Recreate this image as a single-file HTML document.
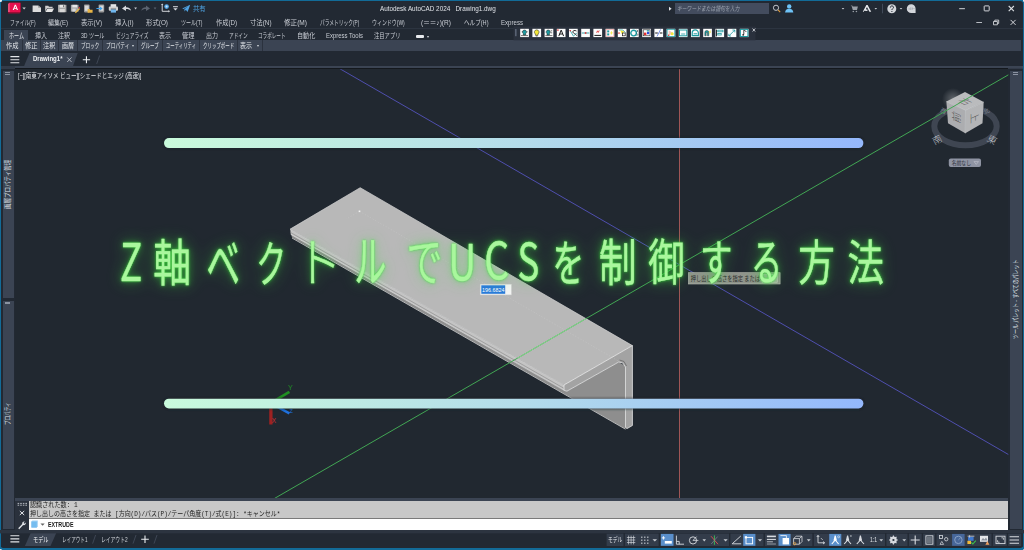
<!DOCTYPE html>
<html lang="ja">
<head>
<meta charset="utf-8">
<title>Z軸ベクトルでUCSを制御する方法</title>
<style>
*{box-sizing:border-box;margin:0;padding:0}
html,body{width:1024px;height:550px;overflow:hidden;background:#126b98}
body{position:relative;font-family:"Liberation Sans","Noto Sans CJK JP",sans-serif;color:#d6dae0;font-size:7px;line-height:1}
.abs{position:absolute}
#win{position:absolute;left:1px;top:1px;width:1022px;height:547px;background:#222933;border-radius:2px 3px 3px 2px;overflow:hidden}
#titlebar{left:0;top:0;width:1022px;height:16px}
#menubar{left:0;top:16px;width:1022px;height:11px}
#ribtabs{left:0;top:27px;width:1022px;height:12px;border-top:1px solid #2c3440}
#panels{left:0;top:39px;width:1020px;height:11px;background:#3b4453}
#doctabs{left:0;top:51px;width:1022px;height:15px}
#canvas{left:14.3px;top:68.2px;width:993px;height:430px;background:#212830}
#lstrip{left:2px;top:70px;width:11.4px;height:457.5px;background:#3b4453}
#rstrip{left:1009.1px;top:70px;width:12px;height:457.5px;background:#3b4453}
#cmd{left:14px;top:497px;width:993px;height:32px;background:#2a313c;border-top:3px solid #3b4453}
#hist{left:14px;top:0;width:979px;height:17px;background:#c8c8c8}
#inp{left:14px;top:18px;width:979px;height:11px;background:#fff;box-shadow:0 -1px 0 #7a7a7a}
#status{left:0;top:529px;width:1022px;height:17px;background:#222933}
#ui{position:absolute;left:0;top:0;width:1024px;height:550px;overflow:hidden;pointer-events:none}
.L{position:absolute;white-space:pre;transform-origin:0 50%;line-height:1.2;color:#cfd3da}
.tri{position:absolute;width:0;height:0;border-left:1.8px solid transparent;border-right:1.8px solid transparent;border-top:2.2px solid #d6dae0}
.sep{position:absolute;width:1px;background:#2b323e}
.bx{position:absolute}
</style>
</head>
<body>
<div id="win">
  <div id="titlebar" class="abs"></div>
  <div id="menubar" class="abs"></div>
  <div id="ribtabs" class="abs"></div>
  <div id="panels" class="abs"></div>
  <div id="doctabs" class="abs"></div>
  <div class="abs" style="left:0;top:65px;width:1022px;height:3px;background:#333b49"></div><div class="abs" style="left:14.3px;top:65px;width:1007.7px;height:2.200px;background:#3b4453"></div><div class="abs" style="left:14.3px;top:67px;width:993px;height:1.300px;background:#14181d"></div>
  <div id="lstrip" class="abs"></div>
  <div id="rstrip" class="abs"></div>
  <div id="canvas" class="abs"></div>

<svg id="scene" class="abs" style="left:-1px;top:-1px" width="1024" height="550" viewBox="0 0 1024 550">
  <defs>
    <clipPath id="topface"><polygon points="360.200,187.700 290.200,229.100 564,385 632.400,345.600"/></clipPath>
    <clipPath id="cv"><rect x="15.3" y="69.2" width="993" height="429.500"/></clipPath>
    <linearGradient id="barg" x1="0" y1="0" x2="1" y2="0">
      <stop offset="0" stop-color="#c9fbdc"/>
      <stop offset="0.5" stop-color="#b4ddea"/>
      <stop offset="1" stop-color="#94b8fc"/>
    </linearGradient>
    <filter id="neon" x="-5%" y="-60%" width="110%" height="220%" color-interpolation-filters="sRGB">
      <feFlood flood-color="#3ae03a" result="gc"/>
      <feComposite in="gc" in2="SourceAlpha" operator="in" result="gs"/>
      <feGaussianBlur in="gs" stdDeviation="8" result="b1"/>
      <feComponentTransfer in="b1" result="b1a"><feFuncA type="linear" slope="0.5"/></feComponentTransfer>
      <feGaussianBlur in="gs" stdDeviation="3.2" result="bm"/>
      <feComponentTransfer in="bm" result="bma"><feFuncA type="linear" slope="0.45"/></feComponentTransfer>
      <feGaussianBlur in="gs" stdDeviation="1.3" result="b2"/>
      <feComponentTransfer in="b2" result="b2a"><feFuncA type="linear" slope="0.85"/></feComponentTransfer>
      <feMerge><feMergeNode in="b1a"/><feMergeNode in="bma"/><feMergeNode in="b2a"/><feMergeNode in="SourceGraphic"/></feMerge>
    </filter>
    <filter id="soft" x="-5%" y="-100%" width="110%" height="300%">
      <feGaussianBlur stdDeviation="1.2"/>
    </filter>
  <radialGradient id="vcglow"><stop offset="0" stop-color="#fff" stop-opacity=".28"/><stop offset="1" stop-color="#fff" stop-opacity="0"/></radialGradient>
  </defs>
  <g clip-path="url(#cv)" id="cad">
    <!-- 3D bracket -->
    <g id="bracket" stroke-linejoin="round">
      <polygon points="291,233.500 564.200,390.400 566.900,391.200 618.500,362.100 625.500,366 625.500,429 292,237.600" fill="#8e8e8e"/>
      <path d="M292 238L625.500 429.200" stroke="#c6c6c6" stroke-width=".9" fill="none"/>
      <polygon points="290.200,229.100 564,385 564.200,390.400 290.800,234.400" fill="#c4c4c4"/>
      <path d="M290.600 232.500L564.100 388.400" stroke="#8f8f8f" stroke-width=".7" fill="none"/>
      <path d="M290.800 234.400L564.200 390.400" stroke="#e2e2e2" stroke-width=".6" fill="none"/>
      <polygon points="360.200,187.700 290.200,229.100 564,385 632.400,345.600" fill="#b8b8b8" stroke="#d6d6d6" stroke-width=".7"/>
      <polygon points="564,385 632.400,345.600 632.400,425.500 627,428.600 625.500,427.500 625.500,367 622.500,362.800 618.500,362.100 566.900,391.200 564.200,390.400" fill="#a3a3a3" stroke="#e8e8e8" stroke-width=".8"/>
      <path d="M619.500 360l4.500 1.500 2.500 4.500" stroke="#6a6a6a" stroke-width=".8" fill="none"/>
    </g>

    <!-- dashed guides on top face -->
    <path d="M359.500 211.300L621 362.500M359.500 211.300L346 219.200" stroke="#d6d6d6" stroke-width=".5" stroke-dasharray="1.500 1.500" fill="none" opacity=".5"/>
    <rect x="358.700" y="210.500" width="1.600" height="1.600" fill="#f4f4f4"/>
    <!-- UCS icon -->
    <g id="ucs" font-family="'Liberation Sans',sans-serif" font-size="7">
      <path d="M270.900 402v22.600" stroke="#9e2222" stroke-width="3.300"/>
      <path d="M273.500 401.400L289.400 391.900" stroke="#1f8f22" stroke-width="2.800"/>
      <path d="M273.500 404.600L289.400 413.400" stroke="#1f72e0" stroke-width="2.400"/>
      <text x="288" y="389.500" fill="#1f8f22">Y</text>
      <text x="271.800" y="422.800" fill="#d03030" font-size="6.500">X</text>
      <text x="289.500" y="412.500" fill="#1f72e0" font-size="5.500">Z</text>
    </g>
    <!-- ViewCube -->
    <g id="viewcube" font-family="'Noto Sans CJK JP','Liberation Sans',sans-serif">
      <ellipse cx="965.500" cy="126.300" rx="31.200" ry="19" fill="none" stroke="#3f4652" stroke-width="6"/>
      <circle cx="953" cy="99" r="11" fill="url(#vcglow)"/>
      <polygon points="965,91.900 983.700,102.100 965.500,110.400 946.400,101.600" fill="#babbbd"/>
      <polygon points="946.400,101.600 965.500,110.400 965.300,133.300 948,123.300" fill="#acadb0"/>
      <polygon points="965.500,110.400 983.700,102.100 982.500,123.300 965.300,133.300" fill="#b4b5b7"/>
      <path d="M946.400 101.600L965.500 110.400L983.700 102.100M965.500 110.400L965.300 133.300" stroke="#d9dadc" stroke-width=".6" fill="none"/>
      <text transform="matrix(.91 .42 -.91 .415 961.400 103.200)" font-size="10.500" fill="#555" text-anchor="middle" font-weight="300">右</text>
      <text transform="matrix(0 -1 .91 .42 960.300 118.700)" font-size="10.500" fill="#555" text-anchor="middle" font-weight="300">前</text>
      <text transform="matrix(0 1 -.91 .415 970.700 118.700)" font-size="10.500" fill="#555" text-anchor="middle" font-weight="300">上</text>
      <text transform="translate(938.700 142.800) rotate(-28)" font-size="9.500" fill="#c6cad1" text-anchor="middle" font-weight="300">南</text>
      <text transform="translate(990.500 142.800) rotate(28)" font-size="9.500" fill="#c6cad1" text-anchor="middle" font-weight="300">東</text>
      <text transform="translate(942.500 113) rotate(28)" font-size="6" fill="#7d8490" text-anchor="middle">西</text>
      <text transform="translate(987.500 113) rotate(-28)" font-size="6" fill="#7d8490" text-anchor="middle">北</text>
      <rect x="948.800" y="158.500" width="32.200" height="8.600" rx="2" fill="#8f94a3"/>
      <text x="951.700" y="165.200" font-size="5.600" fill="#2c303a" textLength="19.300" lengthAdjust="spacingAndGlyphs">名前なし</text>
      <path d="M974 161.600h4.500l-2.250 2.800z" fill="none" stroke="#c2c6d0" stroke-width=".6"/>
    </g>
    <!-- crosshair axes -->
    <line x1="679.5" y1="60" x2="679.5" y2="500" stroke="#a05656" stroke-width="1"/>
    <line x1="273" y1="499.300" x2="1011" y2="73.300" stroke="#42a654" stroke-width="1"/>
    <line x1="273" y1="499.300" x2="1011" y2="73.300" stroke="#86d48c" stroke-width="1" clip-path="url(#topface)"/>
    <line x1="336" y1="66.5" x2="1011" y2="456" stroke="#4f4fae" stroke-width="1"/>

    <!-- tooltip + dynamic input -->
    <g font-family="'Liberation Sans','Noto Sans CJK JP',sans-serif">
      <rect x="688.400" y="272.700" width="91.700" height="11.300" fill="#90948c" stroke="#b9bcb4" stroke-width=".6"/>
      <rect x="762" y="274.200" width="15.500" height="8.300" fill="#a9ada6" stroke="#c9ccc4" stroke-width=".5"/>
      <text x="690.700" y="281" font-size="6.600" fill="#2b2b2b" textLength="69.300" lengthAdjust="spacingAndGlyphs">押し出しの高さを指定 または</text>
      <rect x="480.200" y="284.200" width="31.200" height="10.700" fill="#f4f4f4" stroke="#d0d0d0" stroke-width=".5"/>
      <rect x="481.300" y="285.300" width="23.900" height="8.500" fill="#2a7bd9"/>
      <text x="482" y="292" font-size="6" fill="#fff" textLength="22.500" lengthAdjust="spacingAndGlyphs">196.6824</text>
    </g>
  </g>
  <!-- overlay -->
  <g id="overlay">
    <rect x="163.5" y="137.6" width="700.5" height="11" rx="5.5" fill="#1b2028" filter="url(#soft)" opacity="0.7"/>
    <rect x="163.5" y="398.2" width="700.5" height="11" rx="5.5" fill="#1b2028" filter="url(#soft)" opacity="0.7"/>
    <rect x="164" y="138.1" width="699.4" height="10" rx="5" fill="url(#barg)"/>
    <rect x="164" y="398.7" width="699.4" height="9.7" rx="4.85" fill="url(#barg)"/>
    <g filter="url(#neon)">
      <text id="title" y="280" font-family="'Noto Sans CJK JP','Liberation Sans',sans-serif" font-weight="400" font-size="50" fill="#a9f79d" stroke="#a9f79d" stroke-width="0.4" stroke-linejoin="round" text-anchor="middle"><tspan x="131.0" y="280.5" font-size="51.4" textLength="22.19" lengthAdjust="spacingAndGlyphs">Z</tspan><tspan x="172.2" y="281.0" font-size="50.0" textLength="37.79" lengthAdjust="spacingAndGlyphs">軸</tspan><tspan x="223.2" y="285.0" font-size="58.5" textLength="33.87" lengthAdjust="spacingAndGlyphs">ベ</tspan><tspan x="271.3" y="281.5" font-size="48.9" textLength="29.99" lengthAdjust="spacingAndGlyphs">ク</tspan><tspan x="318.5" y="282.0" font-size="52.5" font-weight="300" textLength="47.32" lengthAdjust="spacingAndGlyphs">ト</tspan><tspan x="370.4" y="282.0" font-size="55.2" textLength="31.74" lengthAdjust="spacingAndGlyphs">ル</tspan><tspan x="424.5" y="281.0" font-size="52.6" font-weight="350" textLength="35.93" lengthAdjust="spacingAndGlyphs">で</tspan><tspan x="462.2" y="279.5" font-size="48.8" textLength="27.87" lengthAdjust="spacingAndGlyphs">U</tspan><tspan x="496.7" y="279.0" font-size="50.1" textLength="24.83" lengthAdjust="spacingAndGlyphs">C</tspan><tspan x="528.4" y="280.0" font-size="50.0" textLength="21.75" lengthAdjust="spacingAndGlyphs">S</tspan><tspan x="568.3" y="280.5" font-size="48.9" textLength="31.61" lengthAdjust="spacingAndGlyphs">を</tspan><tspan x="617.7" y="281.0" font-size="50.1" textLength="37.86" lengthAdjust="spacingAndGlyphs">制</tspan><tspan x="666.5" y="279.5" font-size="49.0" textLength="36.45" lengthAdjust="spacingAndGlyphs">御</tspan><tspan x="716.3" y="280.0" font-size="47.7" textLength="32.44" lengthAdjust="spacingAndGlyphs">す</tspan><tspan x="766.6" y="279.5" font-size="48.8" textLength="31.15" lengthAdjust="spacingAndGlyphs">る</tspan><tspan x="816.6" y="280.0" font-size="48.0" textLength="36.61" lengthAdjust="spacingAndGlyphs">方</tspan><tspan x="865.6" y="280.0" font-size="47.9" textLength="36.39" lengthAdjust="spacingAndGlyphs">法</tspan></text>
    </g>
  </g>
</svg>
  <div id="cmd" class="abs"><div id="hist" class="abs"></div><div id="inp" class="abs"></div></div>
  <div id="status" class="abs"></div>
</div>
<div id="ui"><i class="bx" style="left:4px;top:30px;width:24px;height:11px;background:#3b4453;"></i>
<i class="bx" style="left:416px;top:34.5px;width:8px;height:3.5px;background:#e8eaee;border-radius:1px"></i>
<i class="tri" style="left:426.5px;top:35.5px"></i>
<i class="sep" style="left:21.5px;top:40px;height:11px"></i>
<i class="sep" style="left:39.5px;top:40px;height:11px"></i>
<i class="sep" style="left:57.5px;top:40px;height:11px"></i>
<i class="sep" style="left:77.0px;top:40px;height:11px"></i>
<i class="sep" style="left:102.0px;top:40px;height:11px"></i>
<i class="sep" style="left:137.0px;top:40px;height:11px"></i>
<i class="sep" style="left:162.0px;top:40px;height:11px"></i>
<i class="sep" style="left:199.0px;top:40px;height:11px"></i>
<i class="sep" style="left:236.5px;top:40px;height:11px"></i>
<i class="sep" style="left:261.5px;top:40px;height:11px"></i>
<i class="tri" style="left:132px;top:45px"></i><i class="tri" style="left:256.5px;top:45px"></i>
<i class="bx" style="left:674.8px;top:3px;width:94.6px;height:10.7px;background:#434c5e;"></i>
<svg class="bx" style="left:0;top:0" width="1024" height="70" viewBox="0 0 1024 70">
<!-- app logo -->
<path d="M9.400 2.800h11.400v9l-1.200 1.800h-11.400v-9z" fill="#9c0c34"/>
<path d="M9.400 2.800h10.800v9.200h-12v-8z" fill="#e5104e"/>
<path d="M8.200 4l1.400-1.200v9.200h-1.400z" fill="#ef5f88"/>
<path d="M12.700 10l2.100-5.200h1.100l2.100 5.200h-1.200l-.45-1.150h-2l-.45 1.150zM14.700 7.900h1.300l-.65-1.800z" fill="#fff"/>
<path d="M22.4 7.6h3.4l-1.7 2z" fill="#d0d4da"/>
<!-- new -->
<path d="M32.6 5.4h5.6l2.8 2.4v4.2h-8.4z" fill="#dcdcdc"/><path d="M38.2 5.4v2.4h2.8z" fill="#9a9a9a"/>
<!-- open -->
<path d="M45.2 5.8h3l.8 1h3.6v1.2h-5.4l-2 3.6z" fill="#cfcfcf"/><path d="M47.4 8.4h6.6l-1.8 3.6h-6.8z" fill="#e4e4e4"/>
<!-- save -->
<path d="M58 4.8h8.4v7.4h-8.4z" fill="#a8a8a8"/><rect x="59.6" y="4.8" width="5.2" height="2.8" fill="#e6e6e6"/><rect x="59.6" y="9" width="5.2" height="3.2" fill="#d8d8d8"/><rect x="63" y="5.2" width="1.2" height="2" fill="#777"/>
<!-- save as -->
<path d="M70.9 4.8h7.6v6.8h-7.6z" fill="#a8a8a8"/><rect x="72.3" y="4.8" width="4.8" height="2.6" fill="#e6e6e6"/><rect x="72.3" y="8.6" width="3.4" height="3" fill="#d8d8d8"/><path d="M75.4 11.8l3.6-3.8 1 1-3.6 3.8-1.4.4z" fill="#e8b84a"/><path d="M78.4 7.4l.8-.6 1 1-.6.8z" fill="#e0353a"/>
<!-- open from mobile -->
<rect x="84" y="4.6" width="5.6" height="7.8" rx=".8" fill="#9a9a9a"/><rect x="84.9" y="5.6" width="3.8" height="5.2" fill="#d9d9d9"/><path d="M87.6 9h2l.6.8h2.4v3h-5z" fill="#e8b445"/>
<!-- save to mobile -->
<rect x="98.6" y="4.6" width="5.6" height="7.8" rx=".8" fill="#9a9a9a"/><rect x="99.5" y="5.6" width="3.8" height="5.2" fill="#d9d9d9"/><path d="M96.4 8.1h3.6v-1.5l2.6 2-2.6 2v-1.5h-3.6z" fill="#3ea2ea"/>
<!-- print -->
<rect x="110.6" y="4.2" width="5.6" height="3" fill="#e6e6e6"/><rect x="108.8" y="6.4" width="9.2" height="4.4" rx="1" fill="#d2d2d2"/><rect x="110.8" y="9.2" width="5.2" height="3.4" fill="#6fb6ee"/><rect x="110.8" y="8.6" width="5.2" height=".8" fill="#555"/>
<!-- undo -->
<path d="M122 8.4l4-3v1.8c3 0 4.8 1.2 5 3.6-1.200-1.400-2.600-1.800-5-1.800v1.900z" fill="#d6d9de"/>
<path d="M134.200 7.600h2.800l-1.400 1.800z" fill="#c8ccd2"/>
<!-- redo (dim) -->
<path d="M150 8.400l-4-3v1.800c-3 0-4.400 1.200-4.600 3.600 1.200-1.400 2.200-1.800 4.600-1.800v1.900z" fill="#5b6370"/>
<path d="M153.700 7.600h2.700l-1.350 1.800z" fill="#5b6370"/>
<!-- workspace -->
<path d="M162.200 4.300v7h7" fill="none" stroke="#d0d3d8" stroke-width="1"/><path d="M162.200 3.400l-1.200 1.600h2.400zM170 11.300l-1.600-1.200v2.400z" fill="#d0d3d8"/><circle cx="166.600" cy="6.600" r="2.300" fill="#56a8e8"/><circle cx="166.600" cy="6.600" r="1" fill="#cfe6f8"/>
<!-- customize -->
<rect x="173" y="6.200" width="4.900" height="1" fill="#d6d9de"/><path d="M173.300 8.200h4.300l-2.150 2.200z" fill="#d6d9de"/>
<!-- share plane -->
<path d="M182.200 8.600l8-3.800-2.600 7.200-1.800-2.200-1.200 1.600-.2-2.200 3.800-3-4.600 2.800z" fill="#4fa3e3"/>
<!-- search arrow, magnifier, user -->
<path d="M669 6.800l2.600 2-2.600 2z" fill="#e4e6ea"/>
<circle cx="776" cy="7.800" r="2.600" fill="none" stroke="#cfd3d9" stroke-width=".9"/><path d="M778 9.900l2.200 2.300" stroke="#e09a3a" stroke-width="1.100"/>
<circle cx="789.200" cy="6.400" r="2.200" fill="#6ec2f6"/><path d="M785.100 12.400c.2-2.600 2-3.600 4.100-3.600s3.900 1 4.100 3.600z" fill="#6ec2f6"/>
<!-- right cluster -->
<path d="M841.700 7.900h2.600l-1.300 1.500z" fill="#c8ccd2"/>
<path d="M850.600 5.400h1.600l.5 1.200h5.200l-.9 3.400h-4.200l-1.200-4z" fill="#9aa0a8"/><circle cx="853.300" cy="11.500" r=".8" fill="#9aa0a8"/><circle cx="856.400" cy="11.500" r=".8" fill="#9aa0a8"/>
<path d="M862.800 11.800l3.600-6.800h1.200l3.600 6.800h-1.800l-2.400-4.800-1.200 2.200 2 .6-.6 1.200-3-.2-.4 1z" fill="#e8eaee"/>
<path d="M874.500 7.900h2.600l-1.300 1.500z" fill="#c8ccd2"/>
<rect x="882" y="3.800" width=".8" height="9.500" fill="#4a5363"/>
<circle cx="891.800" cy="8.700" r="4.500" fill="#d3d6db"/><path d="M890.300 7.600c0-2.200 3.200-2.200 3.200-.2 0 1.200-1.600 1.200-1.600 2.600M891.900 11v1" fill="none" stroke="#222933" stroke-width="1"/>
<path d="M899.700 7.900h2.600l-1.300 1.500z" fill="#c8ccd2"/>
<path d="M911.200 4.300a4.400 4.400 0 0 1 4.400 4.400v4.400h-4.400a4.400 4.400 0 0 1 0-8.800z" fill="#d3d6db"/><path d="M909.200 9.600v-1.400M910.800 10v-2.600M912.400 9.600v-2M914 9v-1" stroke="#8a8f98" stroke-width=".6"/>
<!-- window controls -->
<path d="M959.200 8.700h5.700" stroke="#e6e8ec" stroke-width=".9"/>
<rect x="984.200" y="5.900" width="5" height="5" fill="none" stroke="#e6e8ec" stroke-width=".9" rx=".6"/>
<path d="M1008.700 6l5.200 5.200M1013.900 6l-5.200 5.200" stroke="#dcdfe3" stroke-width="1.100"/>
<path d="M976.300 22.500h5.700" stroke="#c9cdd4" stroke-width=".9"/>
<path d="M993.500 21.500h3.900v3.300h-3.900zM994.800 21.400v-1.300h3.900v3.300h-1.200" fill="none" stroke="#e6e8ec" stroke-width=".8"/>
<path d="M1010.600 19.900l5 5M1015.600 19.900l-5 5" stroke="#e6e8ec" stroke-width=".9"/>
<!-- express toolbar -->
<rect x="513.500" y="26.500" width="242" height="13.800" fill="#2a313d"/>
<rect x="515" y="29" width="1.600" height="7.200" fill="#596273"/>
<g transform="translate(520.2,28.8)"><rect width="8.7" height="8.3" fill="#fdfdfd"/><path d="M4.3 1.2a2 2 0 0 1 1.2 3.6v1.4h-2.4v-1.4a2 2 0 0 1 1.2-3.6z" fill="#1f9aa0" stroke="#1a1a1a" stroke-width=".5"/><path d="M.8 6.8h7M1.5 3h1M6.5 3h1" stroke="#1a1a1a" stroke-width=".6"/></g><g transform="translate(532.4,28.8)"><rect width="8.7" height="8.3" fill="#fdfdfd"/><path d="M4.3 1a2.3 2.3 0 0 1 1.3 4.2v1.3h-2.6v-1.3a2.3 2.3 0 0 1 1.3-4.2z" fill="#f2e63a" stroke="#1a1a1a" stroke-width=".5"/><path d="M3.4 7.2h1.8" stroke="#1a1a1a" stroke-width=".6"/></g><g transform="translate(544.6,28.8)"><rect width="8.7" height="8.3" fill="#fdfdfd"/><path d="M3.6 1.2a2 2 0 0 1 1.2 3.6v1.4h-2.4v-1.4a2 2 0 0 1 1.2-3.6z" fill="#1f9aa0" stroke="#1a1a1a" stroke-width=".5"/><path d="M.8 6.8h7M6 2l1.6 0M6 4h1.6" stroke="#1a1a1a" stroke-width=".6"/></g><g transform="translate(556.8,28.8)"><rect width="8.7" height="8.3" fill="#fdfdfd"/><path d="M2 7.3l2.4-6 2.4 6M2.9 5.2h3" fill="none" stroke="#1a1a1a" stroke-width="1"/><rect x=".4" y=".6" width="1.4" height="1.4" fill="#e03030"/></g><g transform="translate(569.0,28.8)"><rect width="8.7" height="8.3" fill="#fdfdfd"/><path d="M1 1.5l3.4 5.8 3.4-3" fill="none" stroke="#1f9aa0" stroke-width=".8"/><path d="M7.5 2.2c-3-1.6-4.6.8-3 2 1.6 1 3 1.6 3.2 2.6" fill="none" stroke="#1a1a1a" stroke-width=".9"/><rect x=".6" y="1.2" width="1.3" height="1.3" fill="#e03030"/></g><g transform="translate(581.2,28.8)"><rect width="8.7" height="8.3" fill="#fdfdfd"/><path d="M.6 4.2h7.6" stroke="#1f9aa0" stroke-width=".9"/><rect x="3.6" y="3.4" width="1.6" height="1.6" fill="#e03030"/></g><g transform="translate(593.4,28.8)"><rect width="8.7" height="8.3" fill="#fdfdfd"/><path d="M1 6.6h6.8" stroke="#1a1a1a" stroke-width="1"/><path d="M3.2 4l.9-2 .8 1.6.9-2" fill="none" stroke="#e03030" stroke-width=".8"/></g><g transform="translate(605.6,28.8)"><rect width="8.7" height="8.3" fill="#fdfdfd"/><rect x=".5" y=".5" width="7.7" height="7.3" fill="none" stroke="#e9a0a0" stroke-width=".7"/><rect x="1.6" y="1.6" width="2" height="2" fill="#1f9aa0"/><rect x="1.6" y="4.6" width="2" height="2" fill="#1f9aa0"/><path d="M6.8 1.5l-2.4 3 1.4.3-1 2.2 2.6-3.2-1.4-.2z" fill="#f2e63a"/></g><g transform="translate(617.8,28.8)"><rect width="8.7" height="8.3" fill="#fdfdfd"/><path d="M1 1.2h4l2.6 2.6" fill="none" stroke="#1f9aa0" stroke-width=".8"/><path d="M2.5 1.5l4 1.2-2.4 2.8z" fill="#f2e63a"/><rect x="4.8" y="4.2" width="2.6" height="2.8" fill="#fff" stroke="#1a1a1a" stroke-width=".7"/><rect x=".5" y="3.6" width="1.4" height="1.4" fill="#e03030"/></g><g transform="translate(630.0,28.8)"><rect width="8.7" height="8.3" fill="#fdfdfd"/><circle cx="3.6" cy="4.3" r="2.8" fill="none" stroke="#1f9aa0" stroke-width="1.4"/><path d="M6.8 1l1 1.2-1 1.2M6.8 4.6l1 1.2-1 1.2" fill="none" stroke="#1a1a1a" stroke-width=".6"/></g><g transform="translate(642.2,28.8)"><rect width="8.7" height="8.3" fill="#fdfdfd"/><rect x="1" y="1" width="6.8" height="6" fill="none" stroke="#1a1a1a" stroke-width=".6"/><rect x="1.8" y="3.8" width="2.4" height="2.6" fill="#e03030"/><rect x="4.8" y="3" width="2.2" height="2.4" fill="#2a50d8"/><rect x="4.6" y="1.4" width="2.2" height="1.2" fill="#1f9aa0"/></g><g transform="translate(654.4,28.8)"><rect width="8.7" height="8.3" fill="#fdfdfd"/><path d="M.8 4.2h2.6M5.4 4.2h2.6" stroke="#1a1a1a" stroke-width="1.1"/><path d="M2.6 7.6l3.6-7" stroke="#2a50d8" stroke-width=".6"/></g><g transform="translate(666.6,28.8)"><rect width="8.7" height="8.3" fill="#fdfdfd"/><rect x=".5" y=".5" width="7.7" height="7.3" fill="none" stroke="#1f9aa0" stroke-width=".8"/><path d="M2 1.4l4.6 2.8-4.6 2.8z" fill="#f3c9b8"/><circle cx="5.6" cy="5" r="1.5" fill="#f2e63a"/><rect x="1.4" y="5.8" width="1.3" height="1.3" fill="#e03030"/></g><g transform="translate(678.8,28.8)"><rect width="8.7" height="8.3" fill="#fdfdfd"/><rect x=".7" y="1.2" width="7.3" height="5.8" fill="none" stroke="#1f9aa0" stroke-width="1"/><path d="M2.4 5.2h4" stroke="#1f9aa0" stroke-width=".8"/></g><g transform="translate(691.0,28.8)"><rect width="8.7" height="8.3" fill="#fdfdfd"/><path d="M1.2 6.8v-2.6a3.1 3.1 0 0 1 6.2 0v2.6z" fill="none" stroke="#1f9aa0" stroke-width="1.2"/><path d="M2.6 5h3.6" stroke="#1f9aa0" stroke-width="1"/></g><g transform="translate(703.2,28.8)"><rect width="8.7" height="8.3" fill="#fdfdfd"/><path d="M1.6 7v-3.4a2 2 0 0 1 4 0v3.4h-1.3v-3.2h-1.3v3.2z" fill="#1f9aa0" stroke="#1a1a1a" stroke-width=".4"/><path d="M7.6 1l-2 2.4 1.1.3-.8 1.8 2.1-2.6-1.1-.2z" fill="#f2e63a"/></g><g transform="translate(715.4,28.8)"><rect width="8.7" height="8.3" fill="#fdfdfd"/><path d="M1 .8v6.8" stroke="#1a1a1a" stroke-width="1"/><rect x="2.4" y="1.4" width="5.2" height="1.6" fill="none" stroke="#1f9aa0" stroke-width=".8"/><rect x="2.4" y="4.6" width="3.4" height="1.6" fill="none" stroke="#1f9aa0" stroke-width=".8"/></g><g transform="translate(727.6,28.8)"><rect width="8.7" height="8.3" fill="#fdfdfd"/><path d="M1.2 7.2l6-6M7.2 1.2h-2.4M7.2 1.2v2.4M1.2 7.2h2.2M1.2 7.2v-2.2" fill="none" stroke="#1f9aa0" stroke-width=".8"/></g><g transform="translate(739.8,28.8)"><rect width="8.7" height="8.3" fill="#fdfdfd"/><rect x=".6" y=".6" width="7.5" height="7.1" fill="none" stroke="#1f9aa0" stroke-width="1"/><path d="M4 1.4v4.2M4 1.6c1.6 0 2.2.8 2.2 1.6" fill="none" stroke="#1a1a1a" stroke-width=".8"/><circle cx="3.4" cy="6" r=".9" fill="#1a1a1a"/></g>
<path d="M752.600 28.500l2.600 3M755.200 28.500l-2.600 3" stroke="#e6e8ec" stroke-width=".8"/>
</svg>
<svg class="bx" style="left:0;top:48px" width="140" height="22" viewBox="0 48 140 22">
<path d="M24.100 65.900l5.400-12.800h48.200l-4.700 12.800z" fill="#3b4453"/>
<path d="M10.400 56.600h8.900M10.400 59.700h8.900M10.400 62.700h8.900" stroke="#e2e5e9" stroke-width="1.100"/>
<path d="M67.200 57.400l4.400 4.600M71.600 57.400l-4.400 4.600" stroke="#c5c9d0" stroke-width=".8"/>
<path d="M82.800 59.750h7.300M86.450 56.200v7.100" stroke="#eceef1" stroke-width="1.100"/>
<path d="M96.700 63.900l3-8.500" stroke="#4a5363" stroke-width=".7"/>
</svg>
<i class="bx" style="left:5px;top:72px;width:5.2px;height:0.8px;background:#8b93a1;"></i>
<i class="bx" style="left:5px;top:73.6px;width:5.2px;height:0.8px;background:#8b93a1;"></i>
<i class="bx" style="left:1012.5px;top:72px;width:5px;height:0.8px;background:#8b93a1;"></i>
<i class="bx" style="left:1012.5px;top:73.6px;width:5px;height:0.8px;background:#8b93a1;"></i>
<i class="bx" style="left:2px;top:298px;width:13px;height:2.6px;background:#222933;"></i>
<i class="bx" style="left:5px;top:301.6px;width:5.2px;height:0.8px;background:#8b93a1;"></i>
<i class="bx" style="left:5px;top:303.1px;width:5.2px;height:0.8px;background:#8b93a1;"></i>
<svg class="bx" style="left:0;top:494px" width="1024" height="56" viewBox="0 494 1024 56">
<!-- cmd handle icons -->
<path d="M17.600 503.400h1.600M20.200 503.400h1.600M22.800 503.400h1.600M25.400 503.400h1.600M17.600 505.200h1.600M20.200 505.200h1.600M22.800 505.200h1.600M25.400 505.200h1.600" stroke="#c5c9d0" stroke-width=".9"/>
<path d="M19.800 511l4.400 4M24.200 511l-4.400 4" stroke="#e2e5e9" stroke-width="1"/>
<path d="M18.200 528.200l4-4.200a2 2 0 0 1 2.600-2.400l-1.200 1.400.8.800 1.400-1.200a2 2 0 0 1-2.600 2.400l-4 4.200z" fill="#e2e5e9"/>
<!-- cube + arrow -->
<path d="M31.400 521.600l1-1.100h5.400v5.800l-1 1.300h-5.400z" fill="#9fd0f4"/><path d="M31.400 521.600h5.400v6h-5.400z" fill="#76bdf0"/>
<path d="M40.500 523.500h4.200l-2.100 2.300z" fill="#666"/>
<!-- layout tabs -->
<path d="M24.900 545.900l6-13.400h25.600l-6 13.400z" fill="#3b4453"/>
<path d="M10.400 535.800h8.900M10.400 538.900h8.900M10.400 541.900h8.900" stroke="#e2e5e9" stroke-width="1.100"/>
<path d="M92.600 543.600l3-8.600M133 543.600l3-8.600M154 543.600l3-8.600" stroke="#4a5363" stroke-width=".7"/>
<path d="M141.200 539.300h7.600M145 535.600v7.400" stroke="#eceef1" stroke-width="1.100"/>
<rect x="0" y="530" width="1024" height="3.400" fill="#2c3440"/><rect x="606.600" y="533.700" width="414.600" height="12.300" fill="#333c4a"/><rect x="623.5" y="533" width="1.400" height="14" fill="#222933"/><path d="M628.600 535.600v8.800M631.100 535.600v8.800M633.600 535.600v8.800M626.900 537.500h8.400M626.900 540h8.400M626.900 542.500h8.400" stroke="#d9dce1" stroke-width=".65" fill="none"/><rect x="641.2" y="536.6" width="1.200" height="1.200" fill="#d9dce1"/><rect x="641.2" y="539.6" width="1.200" height="1.200" fill="#d9dce1"/><rect x="641.2" y="542.6" width="1.200" height="1.200" fill="#d9dce1"/><rect x="644.2" y="536.6" width="1.200" height="1.200" fill="#d9dce1"/><rect x="644.2" y="539.6" width="1.200" height="1.200" fill="#d9dce1"/><rect x="644.2" y="542.6" width="1.200" height="1.200" fill="#d9dce1"/><rect x="647.2" y="536.6" width="1.200" height="1.200" fill="#d9dce1"/><rect x="647.2" y="539.6" width="1.200" height="1.200" fill="#d9dce1"/><rect x="647.2" y="542.6" width="1.200" height="1.200" fill="#d9dce1"/><path d="M652.5 539.200h4.6l-2.30 2.200z" fill="#c8ccd2"/><rect x="658.7" y="533" width="1.400" height="14" fill="#222933"/><rect x="660.9" y="533.900" width="12.6" height="11.900" fill="#5a8fcb"/><path d="M663.400 536.200v3.400M661.800 537.900h3.300" stroke="#fff" stroke-width=".9"/><rect x="664.800" y="541" width="7" height="2.600" fill="#fff"/><path d="M676.400 535.600v8.600h7.600M676.400 541.400h2.800v2.800" stroke="#d9dce1" stroke-width=".9" fill="none"/><circle cx="693" cy="540.400" r="3.600" fill="none" stroke="#d9dce1" stroke-width=".9"/><path d="M693 540.400h5.400M693 540.400l3.600-3.800" stroke="#d9dce1" stroke-width=".8"/><path d="M702.5 539.200h3.5l-1.75 2.200z" fill="#c8ccd2"/><path d="M714.400 535.400v9.400" stroke="#3fbf5a" stroke-width=".9"/><path d="M711 536.200l7 8" stroke="#e05050" stroke-width=".9"/><path d="M717.600 536.600l-6.400 7.400" stroke="#8a919c" stroke-width=".6"/><path d="M723.5 539.200h4.2l-2.10 2.200z" fill="#c8ccd2"/><rect x="729.0" y="533" width="1.400" height="14" fill="#222933"/><path d="M740.800 536l-8.600 7.800h9" stroke="#d9dce1" stroke-width=".9" fill="none"/><rect x="743.2" y="533.900" width="12.2" height="11.900" fill="#5a8fcb"/><rect x="746" y="537.400" width="6.600" height="6.400" fill="none" stroke="#fff" stroke-width=".9"/><rect x="744.800" y="536.200" width="2.200" height="2.200" fill="#fff"/><path d="M757.9 539.200h4.2l-2.10 2.200z" fill="#c8ccd2"/><rect x="763.5" y="533" width="1.400" height="14" fill="#222933"/><path d="M766.900 536.400h9" stroke="#d9dce1" stroke-width="1.600"/><path d="M766.900 539.400h9" stroke="#d9dce1" stroke-width="1.100"/><path d="M766.900 541.800h6" stroke="#d9dce1" stroke-width=".8"/><path d="M766.900 544h9" stroke="#d9dce1" stroke-width=".6"/><rect x="778.5" y="533.900" width="12.1" height="11.900" fill="#5a8fcb"/><path d="M780.400 535.600h6v2.600" stroke="#fff" stroke-width=".8" fill="none"/><rect x="782.600" y="538" width="6.400" height="6.400" fill="#fff"/><path d="M793.600 538.600l2.600-2.400h5.800v5.400l-2.600 2.600h-5.800zM793.600 538.600h5.800v5.600M799.400 538.600l2.600-2.400" stroke="#d9dce1" stroke-width=".8" fill="none"/><circle cx="794.600" cy="543.600" r="1.200" fill="none" stroke="#e8a23a" stroke-width=".8"/><path d="M806.8 539.200h3.8l-1.90 2.200z" fill="#c8ccd2"/><rect x="812.4" y="533" width="1.400" height="14" fill="#222933"/><path d="M818 535.400v7.400h6.600M818 535.400l-1.200 1.600M818 535.400l1.200 1.600M824.600 542.800l-1.600-1.200M824.600 542.800l-1.600 1.200M821 538.200l1.600 1.600" stroke="#d9dce1" stroke-width=".9" fill="none"/><rect x="829.2" y="533.900" width="12.1" height="11.900" fill="#5a8fcb"/><path d="M835.200 535.600v4.400l-3.400 4M835.200 540l3.400 4M835.200 535.600l-1.200 5M835.200 535.600l1.200 5" stroke="#fff" stroke-width="1.100" fill="none"/><circle cx="838.600" cy="536.800" r="1" fill="none" stroke="#fff" stroke-width=".5"/><path d="M847.600 535.600v4.400l-3.400 4M847.600 540l3.400 4M847.600 535.600l-1.200 5M847.600 535.600l1.200 5" stroke="#d9dce1" stroke-width="1.100" fill="none"/><path d="M850 536h1.800M850.900 535.100v1.800" stroke="#d9dce1" stroke-width=".5"/><path d="M860.400 535.600v4.400l-3.600 4M860.400 540l3.600 4M860.400 535.600l-1.200 5M860.400 535.600l1.200 5" stroke="#d9dce1" stroke-width="1.100" fill="none"/><path d="M879.4 539.200h3.7l-1.85 2.200z" fill="#c8ccd2"/><rect x="885.0" y="533" width="1.400" height="14" fill="#222933"/><circle cx="893.400" cy="540" r="2.500" fill="none" stroke="#d9dce1" stroke-width="1.800"/><path d="M893.400 535.600v8.800M889 540h8.800M890.300 536.900l6.200 6.200M896.500 536.900l-6.200 6.200" stroke="#d9dce1" stroke-width="1.100"/><circle cx="893.400" cy="540" r="1.100" fill="#2b323e"/><path d="M902.4 539.200h3.7l-1.85 2.200z" fill="#c8ccd2"/><rect x="907.5" y="533" width="1.400" height="14" fill="#222933"/><path d="M910.700 540h9M915.200 535.600v8.800" stroke="#d9dce1" stroke-width="1.100"/><rect x="921.7" y="533" width="1.400" height="14" fill="#222933"/><rect x="925.900" y="535.800" width="7" height="8.400" fill="none" stroke="#d9dce1" stroke-width=".9"/><path d="M927 538h4.800M927 540h4.800M927 542h4.800" stroke="#d9dce1" stroke-width=".7"/><rect x="935.1" y="533" width="1.400" height="14" fill="#222933"/><rect x="939.600" y="535.600" width="3" height="3" fill="none" stroke="#d9dce1" stroke-width=".8"/><circle cx="946.200" cy="539.200" r="1.700" fill="none" stroke="#d9dce1" stroke-width=".8"/><path d="M940 544.400l1.800-3 1.800 3z" fill="none" stroke="#d9dce1" stroke-width=".7"/><rect x="952.1" y="533.900" width="12.5" height="11.900" fill="#47679a"/><circle cx="958.400" cy="539.900" r="3.700" fill="none" stroke="#8fa6c8" stroke-width=".9"/><path d="M958.400 539.900l2.400-2.400" stroke="#8fa6c8" stroke-width=".8"/><rect x="968" y="536.800" width="5.600" height="4" fill="#3f79d0"/><path d="M967.600 536.200h6.800M969.600 535.200v2.400" stroke="#e8eaee" stroke-width=".7"/><rect x="967.400" y="540.800" width="3.600" height="3.200" fill="#f0b83a"/><path d="M971.200 542.400l1.600 1.600 3-3.400" stroke="#3cc04a" stroke-width="1.100" fill="none"/><rect x="980" y="535.800" width="8" height="6" fill="#e4e6ea"/><path d="M981 540.600l2-2.600 1.600 1.600 1.400-2.200 1.600 3.200z" fill="#8a919c"/><path d="M985.400 544.800l2-3.800 2 3.800z" fill="#f0a060"/><rect x="991.5" y="533" width="1.400" height="14" fill="#222933"/><rect x="996" y="536.200" width="9" height="7.400" fill="none" stroke="#d9dce1" stroke-width=".9"/><path d="M997.600 540.200v2h2M1003.400 539.800v-2h-2" stroke="#d9dce1" stroke-width=".8" fill="none"/><rect x="1006.8" y="533" width="1.400" height="14" fill="#222933"/><path d="M1009.600 536.800h9.400M1009.600 540h9.400M1009.600 543.200h9.400" stroke="#d9dce1" stroke-width="1.100"/>
</svg>
<i class="bx" style="left:-1.500px;top:-1.500px;width:3px;height:3px;border-radius:50%;background:#dfeaf0"></i><i class="bx" style="left:-1.500px;top:548.500px;width:3px;height:3px;border-radius:50%;background:#dfeaf0"></i><i class="bx" style="left:1022.500px;top:548.500px;width:3px;height:3px;border-radius:50%;background:#dfeaf0"></i><i class="bx" style="left:1022.500px;top:-1.500px;width:3px;height:3px;border-radius:50%;background:#dfeaf0"></i>
<span class="L" style='left:9.50px;top:19.10px;font-size:7px;transform:scaleX(0.6901);color:#c9cdd4;'>ファイル(F)</span>
<span class="L" style='left:48.00px;top:19.10px;font-size:7px;transform:scaleX(0.8568);color:#c9cdd4;'>編集(E)</span>
<span class="L" style='left:81.00px;top:19.10px;font-size:7px;transform:scaleX(0.8996);color:#c9cdd4;'>表示(V)</span>
<span class="L" style='left:114.50px;top:19.10px;font-size:7px;transform:scaleX(0.8976);color:#c9cdd4;'>挿入(I)</span>
<span class="L" style='left:146.00px;top:19.10px;font-size:7px;transform:scaleX(0.9125);color:#c9cdd4;'>形式(O)</span>
<span class="L" style='left:180.50px;top:19.10px;font-size:7px;transform:scaleX(0.7178);color:#c9cdd4;'>ツール(T)</span>
<span class="L" style='left:215.50px;top:19.10px;font-size:7px;transform:scaleX(0.8854);color:#c9cdd4;'>作成(D)</span>
<span class="L" style='left:250.00px;top:19.10px;font-size:7px;transform:scaleX(0.9065);color:#c9cdd4;'>寸法(N)</span>
<span class="L" style='left:284.00px;top:19.10px;font-size:7px;transform:scaleX(0.9388);color:#c9cdd4;'>修正(M)</span>
<span class="L" style='left:319.75px;top:19.10px;font-size:7px;transform:scaleX(0.6753);color:#c9cdd4;'>パラメトリック(P)</span>
<span class="L" style='left:372.00px;top:19.10px;font-size:7px;transform:scaleX(0.7076);color:#c9cdd4;'>ウィンドウ(W)</span>
<span class="L" style='left:421.00px;top:19.10px;font-size:7px;transform:scaleX(0.9407);color:#c9cdd4;'>(＝＝♪)(R)</span>
<span class="L" style='left:464.00px;top:19.10px;font-size:7px;transform:scaleX(0.7976);color:#c9cdd4;'>ヘルプ(H)</span>
<span class="L" style='left:501.00px;top:19.10px;font-size:7px;transform:scaleX(0.8697);color:#c9cdd4;'>Express</span>
<span class="L" style='left:8.75px;top:32.20px;font-size:7px;transform:scaleX(0.7213);color:#e6e8ec;'>ホーム</span>
<span class="L" style='left:34.50px;top:32.20px;font-size:7px;transform:scaleX(0.8571);color:#c9cdd4;'>挿入</span>
<span class="L" style='left:58.00px;top:32.20px;font-size:7px;transform:scaleX(0.8571);color:#c9cdd4;'>注釈</span>
<span class="L" style='left:81.00px;top:32.20px;font-size:7px;transform:scaleX(0.7365);color:#c9cdd4;'>3D ツール</span>
<span class="L" style='left:115.50px;top:32.20px;font-size:7px;transform:scaleX(0.6747);color:#c9cdd4;'>ビジュアライズ</span>
<span class="L" style='left:159.00px;top:32.20px;font-size:7px;transform:scaleX(0.8571);color:#c9cdd4;'>表示</span>
<span class="L" style='left:182.00px;top:32.20px;font-size:7px;transform:scaleX(0.8929);color:#c9cdd4;'>管理</span>
<span class="L" style='left:205.50px;top:32.20px;font-size:7px;transform:scaleX(0.8571);color:#c9cdd4;'>出力</span>
<span class="L" style='left:228.75px;top:32.20px;font-size:7px;transform:scaleX(0.6696);color:#c9cdd4;'>アドイン</span>
<span class="L" style='left:258.00px;top:32.20px;font-size:7px;transform:scaleX(0.6548);color:#c9cdd4;'>コラボレート</span>
<span class="L" style='left:296.75px;top:32.20px;font-size:7px;transform:scaleX(0.8690);color:#c9cdd4;'>自動化</span>
<span class="L" style='left:326.00px;top:32.20px;font-size:7px;transform:scaleX(0.8515);color:#c9cdd4;'>Express Tools</span>
<span class="L" style='left:374.00px;top:32.20px;font-size:7px;transform:scaleX(0.7571);color:#c9cdd4;'>注目アプリ</span>
<span class="L" style='left:6.25px;top:42.30px;font-size:7px;transform:scaleX(0.8929);color:#e3e6ea;'>作成</span>
<span class="L" style='left:25.00px;top:42.30px;font-size:7px;transform:scaleX(0.8929);color:#e3e6ea;'>修正</span>
<span class="L" style='left:43.00px;top:42.30px;font-size:7px;transform:scaleX(0.8929);color:#e3e6ea;'>注釈</span>
<span class="L" style='left:62.00px;top:42.30px;font-size:7px;transform:scaleX(0.8571);color:#e3e6ea;'>画層</span>
<span class="L" style='left:81.25px;top:42.30px;font-size:7px;transform:scaleX(0.6518);color:#e3e6ea;'>ブロック</span>
<span class="L" style='left:105.50px;top:42.30px;font-size:7px;transform:scaleX(0.6793);color:#e3e6ea;'>プロパティ</span>
<span class="L" style='left:141.25px;top:42.30px;font-size:7px;transform:scaleX(0.6433);color:#e3e6ea;'>グループ</span>
<span class="L" style='left:166.25px;top:42.30px;font-size:7px;transform:scaleX(0.6228);color:#e3e6ea;'>ユーティリティ</span>
<span class="L" style='left:202.50px;top:42.30px;font-size:7px;transform:scaleX(0.6378);color:#e3e6ea;'>クリップボード</span>
<span class="L" style='left:240.00px;top:42.30px;font-size:7px;transform:scaleX(0.8571);color:#e3e6ea;'>表示</span>
<span class="L" style='left:379.75px;top:4.60px;font-size:7px;transform:scaleX(0.9068);color:#dfe2e7;'>Autodesk AutoCAD 2024   Drawing1.dwg</span>
<span class="L" style='left:193.20px;top:4.50px;font-size:7px;transform:scaleX(0.9000);color:#4fa3e3;'>共有</span>
<span class="L" style='left:676.60px;top:4.94px;font-size:6.6px;transform:scaleX(0.7280);color:#9ea5b1;font-style:italic;'>キーワードまたは語句を入力</span>
<span class="L" style='left:33.30px;top:55.38px;font-size:7.2px;transform:scaleX(0.8391);color:#eef0f3;font-weight:700;'>Drawing1*</span>
<span class="L" style='left:17.80px;top:71.50px;font-size:7px;transform:scaleX(0.7861);color:#e4e6ea;'>[−][南東アイソメ ビュー][シェードとエッジ (高速)]</span>
<span class="L" style='left:4.34px;top:208.50px;font-size:6.6px;transform-origin:0 0;transform:rotate(-90deg) scaleX(0.8363);color:#dfe2e7;'>画層プロパティ管理</span>
<span class="L" style='left:4.34px;top:425.00px;font-size:6.6px;transform-origin:0 0;transform:rotate(-90deg) scaleX(0.6906);color:#dfe2e7;'>プロパティ</span>
<span class="L" style='left:1012.34px;top:338.60px;font-size:6.6px;transform-origin:0 0;transform:rotate(-90deg) scaleX(0.7499);color:#dfe2e7;'>ツール パレット - すべてのパレット</span>
<span class="L" style='left:30.30px;top:501.40px;font-size:7px;transform:scaleX(0.8735);color:#1c1c1c;font-family:"Liberation Mono","Noto Sans CJK JP",monospace;'>認識された数: 1</span>
<span class="L" style='left:30.30px;top:509.70px;font-size:7px;transform:scaleX(0.8556);color:#1c1c1c;font-family:"Liberation Mono","Noto Sans CJK JP",monospace;'>押し出しの高さを指定 または [方向(D)/パス(P)/テーパ角度(T)/式(E)]: *キャンセル*</span>
<span class="L" style='left:48.30px;top:520.94px;font-size:6.6px;transform:scaleX(0.8075);color:#1a1a1a;font-weight:700;'>EXTRUDE</span>
<span class="L" style='left:33.30px;top:535.50px;font-size:7px;transform:scaleX(0.7381);color:#eef0f3;'>モデル</span>
<span class="L" style='left:61.50px;top:535.50px;font-size:7px;transform:scaleX(0.6554);color:#d3d7dd;'>レイアウト1</span>
<span class="L" style='left:101.30px;top:535.50px;font-size:7px;transform:scaleX(0.6837);color:#d3d7dd;'>レイアウト2</span>
<span class="L" style='left:608.40px;top:536.04px;font-size:6.6px;transform:scaleX(0.7229);color:#e2e5e9;'>モデル</span>
<span class="L" style='left:870.20px;top:536.16px;font-size:6.4px;transform:scaleX(0.7986);color:#e2e5e9;'>1:1</span></div>
</body>
</html>
